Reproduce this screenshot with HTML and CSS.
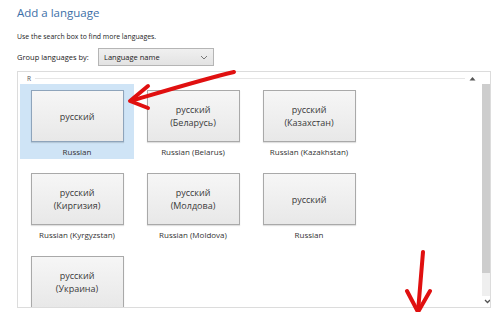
FILE: index.html
```html
<!DOCTYPE html>
<html>
<head>
  <title>Add a language</title>
  <link rel="stylesheet" href="styles.css">
</head>
<body>
  <div class="page">
    <h1 class="title">Add a language</h1>
    <p class="hint">Use the search box to find more languages.</p>
    <div class="group-row">
      <span>Group languages by:</span>
      <div class="select">
        <span>Language name</span>
        <svg width="8" height="5" viewBox="0 0 8 5"><path d="M1 1 L4 4 L7 1" fill="none" stroke="#777" stroke-width="1"/></svg>
      </div>
    </div>

    <div class="panel">
      <div class="panel-head">
        <span class="letter">R</span>
        <span class="head-line"></span>
        <svg class="collapse" width="7" height="5" viewBox="0 0 7 5"><path d="M0.5 4.5 L3.5 1 L6.5 4.5 Z" fill="#555"/></svg>
      </div>
      <div class="panel-body">
        <div class="tiles">
          <div class="tile selected">
            <div class="btn">русский</div>
            <div class="label">Russian</div>
          </div>
          <div class="tile">
            <div class="btn">русский<br>(Беларусь)</div>
            <div class="label">Russian (Belarus)</div>
          </div>
          <div class="tile">
            <div class="btn">русский<br>(Казахстан)</div>
            <div class="label">Russian (Kazakhstan)</div>
          </div>
          <div class="tile"></div>
          <div class="tile">
            <div class="btn">русский<br>(Киргизия)</div>
            <div class="label">Russian (Kyrgyzstan)</div>
          </div>
          <div class="tile">
            <div class="btn">русский<br>(Молдова)</div>
            <div class="label">Russian (Moldova)</div>
          </div>
          <div class="tile">
            <div class="btn">русский</div>
            <div class="label">Russian</div>
          </div>
          <div class="tile"></div>
          <div class="tile">
            <div class="btn">русский<br>(Украина)</div>
          </div>
        </div>
        <div class="scrollbar">
          <svg class="sb-arrow" width="7" height="5" viewBox="0 0 7 5"><path d="M1 4 L3.5 1.5 L6 4" fill="none" stroke="#555" stroke-width="1.3"/></svg>
          <div class="thumb"></div>
          <div class="track"></div>
          <svg class="sb-arrow" width="7" height="5" viewBox="0 0 7 5"><path d="M1 1 L3.5 3.5 L6 1" fill="none" stroke="#555" stroke-width="1.3"/></svg>
        </div>
      </div>
    </div>
  </div>

  <!-- red annotation arrows drawn over the screenshot -->
  <svg class="mark mark-left" width="120" height="45" viewBox="0 0 120 45">
    <path d="M116 4 C90 10 50 22 16 32" fill="none" stroke="#e01010" stroke-width="4" stroke-linecap="round"/>
    <path d="M30 18 L12 33 L30 40" fill="none" stroke="#e01010" stroke-width="4" stroke-linecap="round" stroke-linejoin="round"/>
  </svg>
  <svg class="mark mark-down" width="34" height="68" viewBox="0 0 34 68">
    <path d="M23 4 L18 64" fill="none" stroke="#e01010" stroke-width="4" stroke-linecap="round"/>
    <path d="M7 43 L18 64 L30 43" fill="none" stroke="#e01010" stroke-width="4" stroke-linecap="round" stroke-linejoin="round"/>
  </svg>
</body>
</html>
```

FILE: styles.css
```css
body {
  margin: 0;
  background-color: #fff;
  font-family: "Open Sans", "Noto Sans", sans-serif;
  color: #333;
  width: 498px;
  height: 312px;
  overflow: hidden;
  position: relative;
}
.page {
  padding: 4px 0 0 17px;
}
.title {
  margin: 0;
  font-size: 11.5px;
  font-weight: normal;
  color: #3c6fa8;
  line-height: 18px;
}
.hint {
  margin: 9px 0 0 0;
  font-size: 6.9px;
  line-height: 12px;
  color: #222;
}
.group-row {
  display: flex;
  align-items: center;
  gap: 4px;
  margin-top: 5px;
  font-size: 7.5px;
  color: #222;
}
.group-row > span {
  width: 77px;
}
.select {
  width: 116px;
  height: 18px;
  border: 1px solid #b5b5b5;
  background: linear-gradient(#f0f0f0, #e3e3e3);
  display: flex;
  align-items: center;
  justify-content: space-between;
  padding: 0 5px;
  box-sizing: border-box;
}
.panel {
  margin: 5px 0 0 0;
  width: 474px;
  height: 237px;
  border: 1px solid #dcdcdc;
  box-sizing: border-box;
  display: flex;
  flex-direction: column;
}
.panel-head {
  height: 12px;
  display: flex;
  align-items: center;
  gap: 4px;
  padding: 0 4px 0 9px;
  font-size: 6.5px;
  color: #555;
}
.head-line {
  flex: 1;
  height: 1px;
  background-color: #e6e6e6;
}
.collapse {
  margin-right: 10px;
}
.panel-body {
  flex: 1;
  display: flex;
  overflow: hidden;
}
.tiles {
  flex: 1;
  display: grid;
  grid-template-columns: repeat(4, 114px);
  grid-auto-rows: 75px;
  column-gap: 2px;
  row-gap: 8px;
  padding: 0 0 0 2px;
}
.tile {
  display: flex;
  flex-direction: column;
  align-items: center;
  padding-top: 6px;
  box-sizing: border-box;
}
.tile.selected {
  background-color: #cfe4f6;
}
.btn {
  width: 93px;
  height: 52px;
  border: 1px solid #a9a9a9;
  box-sizing: border-box;
  background: linear-gradient(#f6f6f6, #e8e8e8);
  display: flex;
  align-items: center;
  justify-content: center;
  text-align: center;
  font-size: 9px;
  line-height: 13px;
  color: #3a3a3a;
  box-shadow: 0 1px 1px rgba(0, 0, 0, 0.12);
}
.selected .btn {
  border-color: #8ea4bb;
}
.label {
  margin-top: 4px;
  font-size: 8px;
  color: #333;
}
.scrollbar {
  width: 11px;
  margin-right: 1px;
  display: flex;
  flex-direction: column;
  align-items: center;
  margin-top: -12px;
}
.sb-arrow {
  margin: 3px 0;
}
.thumb {
  width: 11px;
  height: 190px;
  background-color: #cdcdcd;
}
.track {
  flex: 1;
  width: 11px;
  background-color: #efefef;
}
.mark {
  position: absolute;
}
.mark-left {
  left: 118px;
  top: 68px;
}
.mark-down {
  left: 400px;
  top: 248px;
}
```
